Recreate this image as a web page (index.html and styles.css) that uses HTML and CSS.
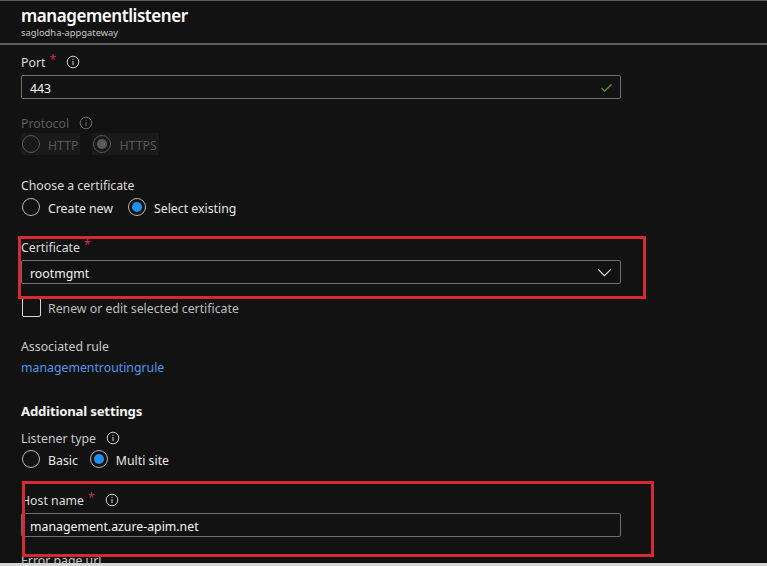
FILE: index.html
```html
<!DOCTYPE html>
<html lang="en">
<head>
<meta charset="utf-8">
<title>managementlistener</title>
<link rel="stylesheet" href="styles.css">
</head>
<body>
<div class="page">
  <header class="header">
    <h1 class="title">managementlistener</h1>
    <div class="subtitle">saglodha-appgateway</div>
  </header>
  <main class="form">
    <div class="label l-port"><span class="txt">Port</span><span class="req">*</span>
      <svg class="info" viewBox="0 0 14 14"><circle cx="7" cy="7" r="5.8" fill="none" stroke="currentColor" stroke-width="1"/><rect x="6.5" y="6" width="1" height="4" fill="currentColor"/><rect x="6.5" y="3.8" width="1" height="1.1" fill="currentColor"/></svg>
    </div>
    <div class="input i-port">
      <span class="val">443</span>
      <svg class="check" viewBox="0 0 14 14"><path d="M1.5 7.5 L5 11 L12.5 3.5" fill="none" stroke="currentColor" stroke-width="1.2"/></svg>
    </div>

    <div class="label disabled l-proto"><span class="txt">Protocol</span>
      <svg class="info" viewBox="0 0 14 14"><circle cx="7" cy="7" r="5.8" fill="none" stroke="currentColor" stroke-width="1"/><rect x="6.5" y="6" width="1" height="4" fill="currentColor"/><rect x="6.5" y="3.8" width="1" height="1.1" fill="currentColor"/></svg>
    </div>
    <div class="radios r-proto">
      <div class="radio disabled"><span class="dot"></span><span class="txt">HTTP</span></div>
      <div class="radio disabled on"><span class="dot"></span><span class="txt">HTTPS</span></div>
    </div>

    <div class="label l-choose"><span class="txt">Choose a certificate</span></div>
    <div class="radios r-choose">
      <div class="radio"><span class="dot"></span><span class="txt">Create new</span></div>
      <div class="radio on"><span class="dot"></span><span class="txt">Select existing</span></div>
    </div>

    <div class="label l-cert"><span class="txt">Certificate</span><span class="req">*</span></div>
    <div class="input i-cert">
      <span class="val">rootmgmt</span>
      <svg class="chev" viewBox="0 0 16 10"><path d="M1 1.5 L8 8.5 L15 1.5" fill="none" stroke="currentColor" stroke-width="1.2"/></svg>
    </div>

    <div class="checkrow">
      <span class="box"></span><span class="txt">Renew or edit selected certificate</span>
    </div>

    <div class="label l-assoc"><span class="txt">Associated rule</span></div>
    <a class="link" href="#">managementroutingrule</a>

    <h2 class="section">Additional settings</h2>
    <div class="label l-ltype"><span class="txt">Listener type</span>
      <svg class="info" viewBox="0 0 14 14"><circle cx="7" cy="7" r="5.8" fill="none" stroke="currentColor" stroke-width="1"/><rect x="6.5" y="6" width="1" height="4" fill="currentColor"/><rect x="6.5" y="3.8" width="1" height="1.1" fill="currentColor"/></svg>
    </div>
    <div class="radios r-ltype">
      <div class="radio"><span class="dot"></span><span class="txt">Basic</span></div>
      <div class="radio on"><span class="dot"></span><span class="txt">Multi site</span></div>
    </div>

    <div class="label l-host"><span class="txt">Host name</span><span class="req">*</span>
      <svg class="info" viewBox="0 0 14 14"><circle cx="7" cy="7" r="5.8" fill="none" stroke="currentColor" stroke-width="1"/><rect x="6.5" y="6" width="1" height="4" fill="currentColor"/><rect x="6.5" y="3.8" width="1" height="1.1" fill="currentColor"/></svg>
    </div>
    <div class="input i-host"><span class="val">management.azure-apim.net</span></div>

    <div class="label l-err"><span class="txt">Error page url</span></div>

    <div class="mark mark-cert"></div>
    <div class="mark mark-host"></div>
  </main>
  <div class="strip"></div>
</div>
</body>
</html>
```

FILE: styles.css
```css
* { box-sizing: border-box; }
html, body { margin: 0; padding: 0; }
body {
  background: #121212;
  color: #e6e6e6;
  font-family: "Noto Sans", "Open Sans", sans-serif;
  font-size: 12.3px;
  overflow: hidden;
}
.page {
  width: 767px;
  height: 566px;
  display: flex;
  flex-direction: column;
  border-top: 1px solid #5a5a5a;
}
.header {
  height: 44px;
  border-bottom: 2px solid #5e5e5e;
  padding-left: 21px;
  flex: none;
}
.title {
  margin: 0;
  padding-top: 4px;
  font-size: 17px;
  line-height: 22px;
  height: 26px;
  font-weight: 600;
  color: #ffffff;
  letter-spacing: -0.45px;
}
.subtitle {
  font-size: 9.4px;
  line-height: 12px;
  height: 12px;
  color: #c8c8c8;
}
.form {
  position: relative;
  flex: 1;
  min-height: 0;
  overflow: hidden;
  padding-left: 21px;
  display: flex;
  flex-direction: column;
  align-items: flex-start;
}
.form > * { flex-shrink: 0; }
.txt, .val { position: relative; top: 1px; }
.label {
  height: 20px;
  line-height: 20px;
  color: #dcdcdc;
  display: flex;
  align-items: center;
  white-space: nowrap;
}
.label.disabled { color: #5c5c5c; }
.req { color: #c4314b; margin-left: 4px; position: relative; top: -2px; }
.info {
  width: 14px;
  height: 14px;
  margin-left: 10px;
  color: #cfcfcf;
}
.label.disabled .info { color: #6a6a6a; }
.l-port { margin-top: 7px; }
.input {
  width: 600px;
  height: 24px;
  border: 1px solid #6e6e6e;
  border-radius: 2px;
  margin-top: 3px;
  padding-left: 8px;
  padding-right: 7px;
  display: flex;
  align-items: center;
  justify-content: space-between;
  color: #f4f4f4;
  background: #121212;
}
.check { width: 13px; height: 13px; color: #5b9e2a; }
.chev { width: 15px; height: 9px; color: #e8e8e8; margin-right: 1px; }
.l-proto { margin-top: 14px; }
.radios {
  display: flex;
  align-items: center;
  height: 22px;
  gap: 12px;
}
.radio {
  display: flex;
  align-items: center;
  gap: 8px;
  height: 22px;
  color: #e6e6e6;
  white-space: nowrap;
}
.radio .dot {
  width: 18px;
  height: 18px;
  border: 1px solid #b5b5b5;
  border-radius: 50%;
  margin-left: 1px;
  display: flex;
  align-items: center;
  justify-content: center;
}
.radio.on .dot::after {
  content: "";
  width: 10px;
  height: 10px;
  border-radius: 50%;
  background: #1f8ff0;
}
.radio.disabled {
  color: #575757;
  background: #1a1a1a;
  padding-right: 2px;
}
.radio.disabled .dot { border-color: #555555; }
.radio.disabled.on .dot::after { background: #5a5a5a; }
.l-choose { margin-top: 20px; }
.r-choose { margin-top: 1px; gap: 14px; }
.l-cert { margin-top: 19px; }
.checkrow {
  display: flex;
  align-items: center;
  gap: 7px;
  height: 22px;
  margin-top: 12px;
  color: #bdbdbd;
}
.checkrow .box {
  width: 19px;
  height: 19px;
  border: 1px solid #d8d8d8;
  border-radius: 2px;
  margin-left: 1px;
}
.l-assoc { margin-top: 18px; color: #c8c8c8; }
.link {
  color: #4f96e8;
  text-decoration: none;
  height: 20px;
  line-height: 22px;
  margin-top: 1px;
}
.section {
  margin: 23px 0 0;
  font-size: 13.2px;
  font-weight: 700;
  line-height: 22px;
  height: 20px;
  color: #f2f2f2;
  letter-spacing: -0.2px;
}
.l-ltype { margin-top: 8px; color: #c8c8c8; }
.r-ltype { gap: 11px; }
.l-host { margin-top: 20px; }
.l-err { margin-top: 13px; color: #c8c8c8; }
.strip {
  height: 3px;
  flex: none;
  background: #d4d4d4;
}
.mark {
  position: absolute;
  border: 3px solid #d42a33;
  pointer-events: none;
}
.mark-cert { left: 18px; top: 191px; width: 628px; height: 63px; }
.mark-host { left: 22px; top: 436px; width: 632px; height: 76px; }
```
